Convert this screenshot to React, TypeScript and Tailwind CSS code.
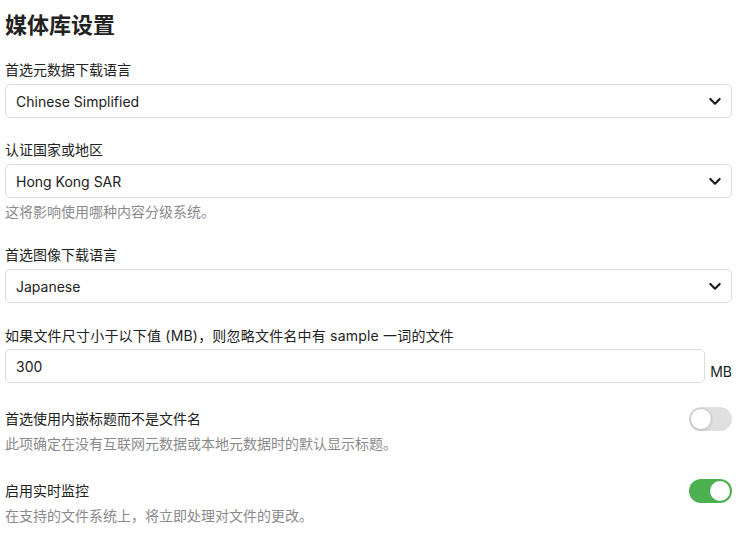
import { useState } from 'react';

const font = { fontFamily: 'Inter, "Noto Sans CJK SC", sans-serif' };

function Chevron() {
  return (
    <svg width="16" height="16" viewBox="0 0 24 24" fill="none" stroke="#1a1a1a" strokeWidth="3.2" strokeLinecap="round" strokeLinejoin="round">
      <path d="M5 9l7 7 7-7" />
    </svg>
  );
}

function SelectField({ label, value, help }: { label: string; value: string; help?: string }) {
  return (
    <div>
      <div className="text-[14px] leading-[20px] text-[#222]">{label}</div>
      <div className="mt-[4px] flex h-[34px] items-center justify-between rounded-[5px] border border-[#dcdcdc] bg-white pl-[10px] pr-[8px]">
        <span className="text-[14px] text-[#222]">{value}</span>
        <Chevron />
      </div>
      {help && <div className="mt-[4px] text-[14px] leading-[20px] text-[#8a8a8a]">{help}</div>}
    </div>
  );
}

function Toggle({ on }: { on: boolean }) {
  return (
    <div
      className={
        on
          ? 'flex h-[24px] w-[43px] shrink-0 items-center justify-end rounded-full bg-[#4caf50] px-[2px]'
          : 'flex h-[24px] w-[43px] shrink-0 items-center justify-start rounded-full bg-[#e0e0e0] px-[1px]'
      }
    >
      <div
        className={
          on
            ? 'h-[20px] w-[20px] rounded-full bg-white'
            : 'h-[22px] w-[22px] rounded-full border border-[#c8c8c8] bg-white shadow-sm'
        }
      />
    </div>
  );
}

function ToggleField({ label, help, on }: { label: string; help: string; on: boolean }) {
  return (
    <div>
      <div className="flex items-center justify-between">
        <div className="text-[14px] leading-[20px] text-[#222]">{label}</div>
        <Toggle on={on} />
      </div>
      <div className="mt-[3px] text-[14px] leading-[20px] text-[#8a8a8a]">{help}</div>
    </div>
  );
}

export default function App() {
  const [size] = useState('300');
  return (
    <div className="min-h-[534px] w-[747px] bg-white pl-[5px] pr-[15px] pt-[10px]" style={font}>
      <h1 className="text-[22px] font-bold leading-[30px] text-[#222]">媒体库设置</h1>

      <div className="mt-[20px]">
        <SelectField label="首选元数据下载语言" value="Chinese Simplified" />
      </div>

      <div className="mt-[22px]">
        <SelectField label="认证国家或地区" value="Hong Kong SAR" help="这将影响使用哪种内容分级系统。" />
      </div>

      <div className="mt-[23px]">
        <SelectField label="首选图像下载语言" value="Japanese" />
      </div>

      <div className="mt-[23px]">
        <div className="text-[14px] leading-[20px] tracking-[0.2px] text-[#222]">
          如果文件尺寸小于以下值 (MB)，则忽略文件名中有 sample 一词的文件
        </div>
        <div className="mt-[3px] flex items-end gap-[5px]">
          <div className="flex h-[34px] flex-1 items-center rounded-[5px] border border-[#dcdcdc] bg-white pl-[10px]">
            <span className="text-[14px] text-[#222]">{size}</span>
          </div>
          <span className="pb-[1px] text-[14px] leading-[20px] text-[#222]">MB</span>
        </div>
      </div>

      <div className="mt-[24px]">
        <ToggleField label="首选使用内嵌标题而不是文件名" help="此项确定在没有互联网元数据或本地元数据时的默认显示标题。" on={false} />
      </div>

      <div className="mt-[25px]">
        <ToggleField label="启用实时监控" help="在支持的文件系统上，将立即处理对文件的更改。" on={true} />
      </div>
    </div>
  );
}
